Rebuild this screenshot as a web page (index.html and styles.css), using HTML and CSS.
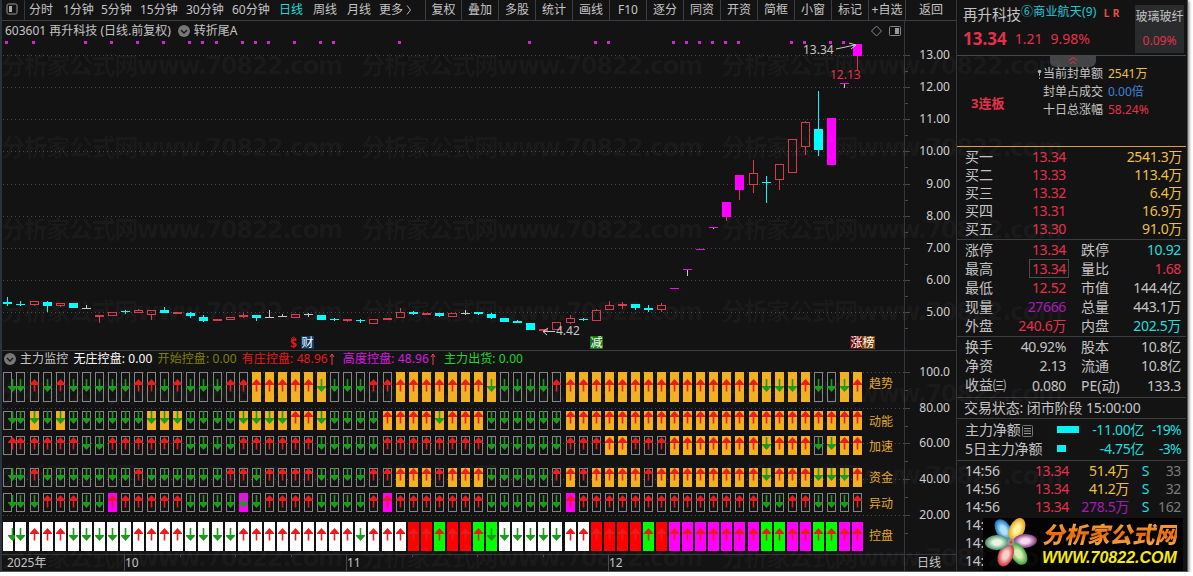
FILE: index.html
```html
<!DOCTYPE html>
<html lang="zh-CN">
<head>
    <meta charset="UTF-8">
    <title>再升科技 603601</title>
    <link rel="stylesheet" href="styles.css">
</head>
<body>
<div class="window">
    <div class="left">
        <div class="toolbar">
            <div class="layout-btn">
                <svg width="12" height="12"><rect x="1" y="1" width="10" height="10" rx="1.5" fill="none" stroke="#999"/><rect x="3" y="3" width="3" height="6" fill="#aaa"/></svg>
            </div>
            <div class="periods">
                <span>分时</span><span>1分钟</span><span>5分钟</span><span>15分钟</span><span>30分钟</span><span>60分钟</span><span class="on">日线</span><span>周线</span><span>月线</span><span>更多</span><span><svg width="6" height="12"><path d="M1 1.5L4.500 6L1 10.500" fill="none" stroke="#b5b5b5"/></svg></span>
            </div>
            <div class="tools">
                <span>复权</span><span>叠加</span><span>多股</span><span>统计</span><span>画线</span><span>F10</span><span>逐分</span><span>同资</span><span>开资</span><span>简框</span><span>小窗</span><span>标记</span><span>+自选</span><span>返回</span>
            </div>
        </div>
        <div class="pane main">
            <div class="plot">
                <div class="title">
                    <span class="code">603601 再升科技 (日线.前复权)</span>
                    <svg width="12" height="12"><circle cx="6" cy="6" r="6" fill="#777"/><path d="M3 5L6 8L9 5" fill="none" stroke="#151515" stroke-width="1.3"/></svg>
                    <span>转折尾A</span>
                    <svg class="corner" width="32" height="14"><path d="M6.500 2L11.500 7L6.500 12L1.500 7Z" fill="none" stroke="#888"/><rect x="19.5" y="2.5" width="11" height="9" rx="1" fill="none" stroke="#888"/><rect x="25" y="4" width="4" height="6" fill="#999"/></svg>
                </div>
                <svg id="kline" width="902" height="311" viewBox="2 39 902 311"></svg>
            </div>
            <svg class="axis" id="axis1" width="51" height="329" viewBox="904 21 51 329"></svg>
        </div>
        <div class="pane sub">
            <div class="plot">
                <div class="title ind">
                    <svg width="12" height="12"><circle cx="6" cy="6" r="6" fill="#777"/><path d="M3 5L6 8L9 5" fill="none" stroke="#151515" stroke-width="1.3"/></svg>
                    <span>主力监控</span>
                    <span class="c-white">无庄控盘: 0.00</span>
                    <span class="c-olive">开始控盘: 0.00</span>
                    <span class="c-red">有庄控盘: 48.96<svg width="6" height="13"><path d="M3 12V1M1 4L3 1L5 4" fill="none" stroke="#f04050"/></svg></span>
                    <span class="c-mag">高度控盘: 48.96<svg width="6" height="13"><path d="M3 12V1M1 4L3 1L5 4" fill="none" stroke="#f04050"/></svg></span>
                    <span class="c-green">主力出货: 0.00</span>
                </div>
                <svg id="signal" width="902" height="185" viewBox="2 369 902 185"></svg>
            </div>
            <svg class="axis" id="axis2" width="51" height="203" viewBox="904 351 51 203"></svg>
        </div>
        <div class="dates">
            <svg id="dates" width="902" height="16" viewBox="2 555 902 16"></svg>
            <span>日线</span>
        </div>
    </div>

    <div class="quote">
        <div class="head">
            <div class="info">
                <div class="name">再升科技<span class="tag">⑥商业航天(9)</span><b class="lr">L</b><b class="lr">R</b></div>
                <div class="price"><b>13.34</b><span>1.21</span><span>9.98%</span></div>
            </div>
            <div class="sector"><span>玻璃玻纤</span><span class="up">0.09%</span></div>
        </div>
        <div class="limit">
            <div class="fold"><svg width="12" height="9"><path d="M2 4.500L6 1.500L10 4.500M3 8L6 5.500L9 8" fill="none" stroke="#e83048"/></svg></div>
            <b class="streak">3连板</b>
            <div class="limit-rows">
                <p><svg width="5" height="10"><circle cx="2.500" cy="2.500" r="1.800" fill="#aaa"/><path d="M2.500 3V7M2.500 8.500V10" stroke="#aaa"/></svg><span>当前封单额</span><i class="yel">2541万</i></p>
                <p><span>封单占成交</span><i class="blue">0.00倍</i></p>
                <p><span>十日总涨幅</span><i class="up">58.24%</i></p>
            </div>
        </div>
        <div class="book">
            <p><span>买一</span><i class="up">13.34</i><i class="yel">2541.3万</i></p>
            <p><span>买二</span><i class="up">13.33</i><i class="yel">113.4万</i></p>
            <p><span>买三</span><i class="up">13.32</i><i class="yel">6.4万</i></p>
            <p><span>买四</span><i class="up">13.31</i><i class="yel">16.9万</i></p>
            <p><span>买五</span><i class="up">13.30</i><i class="yel">91.0万</i></p>
        </div>
        <div class="stats">
            <p><span>涨停</span><i class="up">13.34</i><span>跌停</span><i class="down">10.92</i></p>
            <p><span>最高</span><i class="up boxed">13.34</i><span>量比</span><i class="up">1.68</i></p>
            <p><span>最低</span><i class="up">12.52</i><span>市值</span><i>144.4亿</i></p>
            <p><span>现量</span><i class="pur">27666</i><span>总量</span><i>443.1万</i></p>
            <p><span>外盘</span><i class="up">240.6万</i><span>内盘</span><i class="down">202.5万</i></p>
        </div>
        <div class="stats fin">
            <p><span>换手</span><i>40.92%</i><span>股本</span><i>10.8亿</i></p>
            <p><span>净资</span><i>2.13</i><span>流通</span><i>10.8亿</i></p>
            <p><span>收益<small>㈢</small></span><i>0.080</i><span>PE(动)</span><i>133.3</i></p>
        </div>
        <div class="status">交易状态: 闭市阶段 15:00:00</div>
        <div class="flow">
            <p><span>主力净额<svg width="13" height="13"><rect x="1.5" y="1.5" width="10" height="11" rx="1" fill="none" stroke="#777"/><path d="M3 4.500H10M3 7H10M3 9.500H10" stroke="#999"/></svg></span><em class="bar b1"></em><i>-11.00亿</i><i>-19%</i></p>
            <p><span>5日主力净额</span><em class="bar b2"></em><i>-4.75亿</i><i>-3%</i></p>
        </div>
        <div class="ticks">
            <p><span>14:56</span><i class="up">13.34</i><i class="yel">51.4万</i><i class="down">S</i><i class="dim">33</i></p>
            <p><span>14:56</span><i class="up">13.34</i><i class="yel">41.2万</i><i class="down">S</i><i class="dim">32</i></p>
            <p><span>14:56</span><i class="up">13.34</i><i class="pur">278.5万</i><i class="down">S</i><i class="dim">162</i></p>
            <p><span>14:</span></p>
            <p><span>14:</span></p>
            <p><span>14:</span></p>
        </div>
        <div class="logo">
            <svg width="54" height="53" viewBox="-28 -24 54 53">
                <defs>
                    <radialGradient id="pb"><stop offset=".35" stop-color="#b0e0f8"/><stop offset="1" stop-color="#1070c0"/></radialGradient>
                    <radialGradient id="py"><stop offset=".35" stop-color="#fdf3a0"/><stop offset="1" stop-color="#e8a010"/></radialGradient>
                    <radialGradient id="pp"><stop offset=".35" stop-color="#f4d8ee"/><stop offset="1" stop-color="#80307c"/></radialGradient>
                    <radialGradient id="pg"><stop offset=".35" stop-color="#d8f0b0"/><stop offset="1" stop-color="#389c38"/></radialGradient>
                    <radialGradient id="pr"><stop offset=".35" stop-color="#fbd0c8"/><stop offset="1" stop-color="#c82c34"/></radialGradient>
                    <radialGradient id="pt"><stop offset=".35" stop-color="#e8f4e0"/><stop offset="1" stop-color="#408c68"/></radialGradient>
                </defs>
                <ellipse cx="14" rx="12" ry="7.5" fill="url(#pb)" transform="rotate(-122)"/>
                <ellipse cx="14" rx="12" ry="7.5" fill="url(#py)" transform="rotate(-65)"/>
                <ellipse cx="14" rx="12" ry="7" fill="url(#pp)" transform="rotate(-4)"/>
                <ellipse cx="14" rx="12" ry="7.5" fill="url(#pg)" transform="rotate(58)"/>
                <ellipse cx="14" rx="12" ry="7.5" fill="url(#pr)" transform="rotate(112)"/>
                <ellipse cx="14" rx="12" ry="7.5" fill="url(#pt)" transform="rotate(178)"/>
                <circle r="3.5" fill="#8a9a90"/><circle r="1.6" fill="#d84030"/>
            </svg>
            <div class="logo-text"><b>分析家公式网</b><strong>WWW.70822.COM</strong></div>
        </div>
    </div>
    <svg class="watermark" id="watermark" width="1187" height="571"></svg>
</div>
<script src="chart.js"></script>
</body>
</html>
```
FILE: styles.css
```css
body, p {
    margin: 0;
    padding: 0;
}

body {
    background: #fff;
    font-family: "Noto Sans", "Noto Sans CJK SC", sans-serif;
    font-size: 12px;
    color: #c4c4c4;
    overflow: hidden;
}

i, em {
    font-style: normal;
}

.window {
    display: flex;
    position: relative;
    box-sizing: border-box;
    width: 1188px;
    height: 572px;
    background: #141314;
    border-left: 2px solid #2b333d;
    border-right: 1px solid #555;
    border-bottom: 1px solid #555;
    box-shadow: 1px 1px 3px #777;
}

.left {
    width: 954px;
    border-right: 1px solid #33363b;
}

/* 顶部工具栏 */
.toolbar {
    display: flex;
    height: 20px;
    line-height: 19px;
    border-bottom: 1px solid #3a3d42;
    white-space: nowrap;
}

.layout-btn {
    width: 22px;
    border-right: 1px solid #33363b;
}

.layout-btn svg {
    margin: 3px 0 0 4px;
    display: block;
}

.periods {
    display: grid;
    grid-template-columns: 34px 38px 39px 46px 46px 47px 34px 34px 32px 27px 19px;
    width: 396px;
    padding-left: 4px;
}

.periods .on {
    color: #22d8d8;
}

.periods svg {
    vertical-align: -2px;
}

.tools {
    display: grid;
    grid-template-columns: 36px repeat(12, 37px) 1fr;
    flex: 1;
    text-align: center;
}

.tools span {
    border-left: 1px solid #3a3d42;
}

.pane {
    display: flex;
}

.main {
    height: 329px;
    border-bottom: 1px solid #3a3d42;
}

.sub {
    height: 203px;
    border-bottom: 1px solid #33363b;
}

.plot {
    width: 902px;
}

.pane svg, .dates svg {
    display: block;
}

.axis {
    border-left: 1px solid #33363b;
}

.title {
    display: flex;
    align-items: center;
    box-sizing: border-box;
    height: 18px;
    padding: 2px 0 0 3px;
    line-height: 16px;
    white-space: nowrap;
}

.title svg {
    margin: 0 4px 0 7px;
}

.title .corner {
    margin: 0 2px 0 auto;
}

.ind {
    padding: 0 0 2px 2px;
}

.ind span {
    display: flex;
    align-items: center;
    margin-right: 5px;
    letter-spacing: 0.1px;
}

.ind > svg {
    margin: 0 4px 0 0;
}

.ind span svg {
    margin: 0 3px 0 1px;
}

.c-white { color: #fff; }
.c-olive { color: #808000; }
.c-red { color: #e81818; }
.c-mag { color: #d818e0; }
.c-green { color: #18d828; }

.dates {
    display: flex;
    height: 16px;
    line-height: 15px;
}

.dates span {
    flex: 1;
    border-left: 1px solid #33363b;
    padding-left: 12px;
}

svg text {
    font-family: "Noto Sans", "Noto Sans CJK SC", sans-serif;
    font-size: 12px;
    fill: #c4c4c4;
}

/* 右侧行情 */
.quote {
    position: relative;
    width: 229px;
    font-size: 14px;
    overflow: hidden;
    white-space: nowrap;
}

.quote i {
    letter-spacing: -0.35px;
}

.up { color: #e6304a; }
.down { color: #20dede; }
.yel { color: #ecc040; }
.blue { color: #3c84d8; }
.pur { color: #a818b8; }
.dim { color: #7c7c7c; }

.head {
    display: flex;
    justify-content: space-between;
    height: 55px;
    border-bottom: 1px solid #44474b;
}

.info {
    padding-left: 6px;
}

.name {
    display: flex;
    height: 27px;
    line-height: 29px;
    font-size: 14.5px;
}

.tag {
    margin-right: 7px;
    font-size: 12px;
    line-height: 23px;
    letter-spacing: 0.2px;
    color: #20c8d8;
}

.lr {
    width: 9px;
    font-size: 10px;
    line-height: 26px;
    color: #e85040;
}

.price {
    display: flex;
    gap: 8px;
    color: #e6304a;
    font-size: 14px;
    line-height: 24px;
}

.price b {
    font-size: 17px;
}

.sector {
    display: flex;
    flex-direction: column;
    width: 49px;
    height: 48px;
    margin: 5px 2px 0 0;
    background: #292b2d;
    font-size: 12px;
    line-height: 24px;
    text-align: center;
}

.limit {
    display: flex;
    position: relative;
    height: 90px;
    border-bottom: 1px solid #dca04a;
}

.fold {
    position: absolute;
    left: 93px;
    top: 0;
    width: 46px;
    height: 11px;
    background: #434446;
    border-radius: 0 0 6px 6px;
    text-align: center;
    line-height: 8px;
}

.streak {
    width: 66px;
    padding-left: 14px;
    font-size: 13px;
    line-height: 95px;
    color: #e6304a;
}

.limit-rows {
    position: relative;
    padding-top: 9px;
    font-size: 12px;
    line-height: 18px;
}

.limit-rows p {
    display: flex;
    justify-content: flex-end;
    align-items: center;
}

.limit-rows span {
    width: 61px;
    margin-left: 1px;
}

.limit-rows i {
    width: 46px;
    margin-left: 4px;
    letter-spacing: 0;
}

.book, .stats, .flow, .status {
    border-bottom: 1px solid #3a3d42;
}

.book {
    height: 91px;
    line-height: 18px;
    padding-top: 1px;
}

.book p {
    display: grid;
    grid-template-columns: 40px 61px 116px;
    height: 18px;
    padding-left: 8px;
}

.book i, .stats i, .flow i, .ticks i {
    text-align: right;
}

.stats {
    height: 96px;
}

.stats p {
    display: grid;
    grid-template-columns: 40px 61px 44px 71px;
    align-items: center;
    height: 19px;
    padding-left: 8px;
    line-height: 19px;
}

.stats span + i + span {
    padding-left: 15px;
}

.stats .boxed {
    justify-self: end;
    margin-right: -2px;
    padding: 0 2px;
    line-height: 17px;
    height: 17px;
    outline: 1px solid #4c4c4c;
}

.stats small {
    font-size: 13px;
}

.fin {
    height: 60px;
}

.status {
    height: 20px;
    padding-left: 7px;
    font-size: 14px;
    letter-spacing: -0.1px;
    line-height: 20px;
}

.flow {
    height: 40px;
    padding-top: 1px;
    color: #20dede;
}

.flow p {
    display: grid;
    grid-template-columns: 92px 30px 57px 37px;
    align-items: center;
    height: 19px;
    padding-left: 8px;
    line-height: 19px;
}

.flow span {
    color: #c4c4c4;
    letter-spacing: -0.1px;
}

.flow span svg {
    vertical-align: -2px;
}

.flow i:last-child {
    letter-spacing: -0.7px;
}

.bar {
    height: 7px;
    background: #00f4f4;
}

.b1 { width: 22px; }
.b2 { width: 9px; }

.ticks {
    padding-top: 1px;
}

.ticks p {
    display: grid;
    grid-template-columns: 44px 60px 60px 20px 32px;
    height: 18px;
    padding-left: 8px;
    line-height: 18px;
}

.ticks span {
    letter-spacing: -0.2px;
}

/* 右下角标志 */
.logo {
    display: flex;
    align-items: center;
    position: absolute;
    left: 26px;
    bottom: 0;
    width: 200px;
    height: 53px;
    background: #030303;
}

.logo-text {
    display: flex;
    flex-direction: column;
    margin-left: 5px;
}

.logo-text b {
    height: 27px;
    line-height: 27px;
    font-size: 22.5px;
    font-style: italic;
    font-weight: 900;
    background: linear-gradient(#f8b848, #e86808 50%, #f8c060);
    -webkit-background-clip: text;
    color: transparent;
}

.logo-text strong {
    font: italic bold 16px/20px "Liberation Sans", Arial, sans-serif;
    color: #f4e818;
}

.watermark {
    position: absolute;
    left: -2px;
    top: 0;
    pointer-events: none;
}

.watermark text {
    font-family: "DejaVu Sans", "Noto Sans CJK SC", sans-serif;
    font-size: 24px;
    font-weight: bold;
    fill: #fff;
    fill-opacity: 0.035;
}
```
FILE: chart.js
```js
// 颜色
var RED = '#d83a4c', CYAN = '#00ffff', MAG = '#ff00ff', WHITE = '#c8c8c8';

// 第 i 根柱子的左边缘
function colX(i) {
    var x = 3 + 13 * i;
    [2, 16, 29, 43, 57].forEach(function (n) {
        if (i >= n) x++;
    });
    return x;
}

function rect(x, y, w, h, fill) {
    return '<rect x="' + x + '" y="' + y + '" width="' + w + '" height="' + h + '" fill="' + fill + '"/>';
}

function box(x, y, w, h, stroke) {
    return '<rect x="' + (x + 0.5) + '" y="' + (y + 0.5) + '" width="' + (w - 1) + '" height="' + (h - 1) + '" fill="none" stroke="' + stroke + '"/>';
}

function text(x, y, s, fill, extra) {
    return '<text x="' + x + '" y="' + y + '" style="fill:' + (fill || '#c4c4c4') + '" ' + (extra || '') + '>' + s + '</text>';
}

function grid(y) {
    return '<path d="M3 ' + (y + 0.5) + 'H904" stroke="#48484a" stroke-dasharray="1 3"/>';
}

// 类型(h空心 r红实 c青 w白 m紫), 实体上, 实体下, 最高, 最低
var candles = [
    ['c', 302, 304, 297, 306], ['c', 304, 305, 301, 306], ['h', 301, 305, 301, 306], ['c', 302, 306, 301, 312],
    ['h', 303, 306, 303, 307], ['c', 303, 308, 303, 308], ['w', 308, 309, 305, 309], ['r', 315, 317, 315, 323],
    ['h', 312, 316, 312, 316], ['c', 311, 312, 310, 314], ['h', 310, 313, 309, 313], ['h', 310, 315, 310, 320],
    ['c', 310, 313, 307, 313], ['r', 312, 314, 312, 314], ['c', 313, 316, 312, 318], ['c', 317, 321, 315, 322],
    ['r', 319, 321, 319, 321], ['h', 317, 320, 317, 320], ['r', 315, 317, 313, 318], ['c', 315, 318, 315, 321],
    ['w', 317, 318, 310, 318], ['w', 316, 317, 314, 317], ['h', 314, 318, 314, 318], ['w', 314, 315, 313, 317],
    ['c', 315, 320, 315, 320], ['c', 319, 320, 318, 321], ['r', 319, 321, 319, 322], ['c', 320, 321, 319, 323],
    ['h', 319, 324, 319, 324], ['r', 318, 320, 318, 320], ['h', 312, 318, 308, 318], ['c', 312, 314, 311, 315],
    ['r', 313, 315, 313, 315], ['c', 313, 316, 313, 317], ['h', 313, 317, 313, 317], ['w', 313, 314, 310, 315],
    ['c', 312, 314, 312, 315], ['c', 314, 318, 313, 319], ['c', 318, 322, 318, 322], ['c', 321, 323, 320, 323],
    ['c', 323, 330, 323, 330], ['r', 329, 331, 329, 331], ['h', 322, 330, 322, 330], ['h', 318, 323, 315, 324],
    ['c', 319, 320, 318, 321], ['h', 310, 321, 309, 321], ['h', 305, 310, 301, 310], ['r', 304, 306, 302, 309],
    ['c', 304, 308, 304, 310], ['c', 308, 310, 305, 312], ['h', 305, 310, 303, 312], ['m', 288, 289, 288, 289],
    ['m', 269, 270, 269, 276], ['m', 249, 250, 249, 250], ['m', 227, 228, 227, 229], ['m', 202, 217, 202, 221],
    ['m', 175, 190, 175, 200], ['h', 173, 185, 160, 193], ['c', 182, 183, 176, 203], ['h', 164, 180, 164, 190],
    ['h', 139, 173, 139, 173], ['h', 122, 147, 121, 155], ['c', 129, 150, 91, 156], ['m', 118, 165, 118, 165],
    ['m', 83, 84, 83, 88], ['m', 44, 56, 44, 70]
];

function drawKline() {
    var s = '';
    [55, 87, 119, 151, 184, 216, 248, 280, 312].forEach(function (y) {
        s += grid(y);
    });
    [0, 2, 6, 8, 10, 12, 14, 15, 16, 18, 19, 20, 22, 24, 25, 30, 40, 45, 46, 51, 52, 53, 54, 55, 56, 60, 61, 63, 64].forEach(function (i) {
        s += rect(colX(i) + 2, 41, 3, 3, '#d820d8');
    });
    candles.forEach(function (c, i) {
        var x = colX(i), t = c[0], flat = c[2] - c[1] === 1;
        if (t === 'h') {
            s += rect(x + 4, c[3], 1, c[1] - c[3], RED) + rect(x + 4, c[2], 1, c[4] - c[2], RED);
            s += box(x, c[1], 9, c[2] - c[1], RED);
            return;
        }
        var color = {r: RED, c: CYAN, w: WHITE, m: MAG}[t];
        var wick = t === 'm' ? (flat ? WHITE : RED) : color;
        s += rect(x + 4, c[3], 1, c[4] - c[3], wick);
        s += rect(x, c[1], 9, c[2] - c[1], color);
    });

    s += text(803, 54, '13.34') + '<path d="M836 49L855 45M849 43L856 45L851 49" fill="none" stroke="#ccc"/>';
    s += text(830, 79, '12.13', '#e6304a');
    s += text(556, 335, '4.42') + '<path d="M555 331.500H543M548 328L543 331.500L547 335" fill="none" stroke="#ccc"/>';

    // 底部事件标记
    s += text(290, 348, '$', '#e01818', 'font-weight="bold"') + '<path d="M291 339L293.500 337L296 339" fill="none" stroke="#e01818"/>';
    [[301, '财', '#0c3c6c'], [590, '减', '#147414'], [850, '涨', '#6c0808'], [862, '榜', '#7c4008']].forEach(function (m) {
        s += rect(m[0], 336, 13, 13, m[2]) + text(m[0] + 0.5, 347, m[1], '#fff');
    });
    document.getElementById('kline').innerHTML = s;
}

// u/d 表示方向，大写表示填充
var rows = [
    {name: '趋势', y: 372, h: 30, ay: 379, ly: 388, fill: '#f0b020', data: 'ddududdddduududdduuUUUUUDddduuUUUUUUUDdddduUUUUUUUUUUUUUUUDDDUddDU'},
    {name: '动能', y: 411, h: 19, ay: 411, ly: 426, fill: '#f0b020', data: 'ddDdDddddddDDDddddDDDDUUDddddUUUUDUUUddddddUUUUUUUUUUUUUUUUUUUUUUU'},
    {name: '加速', y: 436, h: 19, ay: 437, ly: 451, fill: '#f0b020', data: 'uuuuuudduuuuuudddduuuuuuddddduuuuuuuudddddduuuUUuuuUUUUUUUDUUUdDUU'},
    {name: '资金', y: 468, h: 19, ay: 468, ly: 482, fill: '#f0b020', data: 'ddudddddddudddddduuduuuudddduuUUUuUUUddddduUuUUUUuUUUUUUUUDUUUDDDU'},
    {name: '异动', y: 493, h: 19, ay: 495, ly: 508, fill: '#ff00ff', data: 'ddduuuddUuuuuuddddDduuuudddduUuuuuuuuddddddUuuuuuuuuuuuuuudduudddu'}
];
var control = 'dduuuddddduuuudddduuuuuuuuuduuuuuuuuudddddduuuuuuuuuuuuuuuuuuuuuuu';
var controlColor = 'wwwwwwwwwwwwwwwwwwwwwwwwwwwwwwwrrgrrggwwwwwwwrrrrgrmmmmmmmggmmggmm';

function arrow(i, y, dir) {
    var x = colX(i) + (i === 0 ? 9 : 4);
    if (dir === 'u') {
        return '<path d="M' + (x + 0.5) + ' ' + y + 'l4.500 5v1h-3.700v6.500h-1.600v-6.500h-3.700v-1z" fill="#e81c1c"/>';
    }
    return '<path d="M' + (x + 0.5) + ' ' + (y + 13) + 'l4.500 -5v-1h-3.700v-7h-1.600v7h-3.700v1z" fill="#1c9a1c"/>';
}

function drawSignal() {
    var s = '';
    [372, 408, 443, 479, 515].forEach(function (y) {
        s += grid(y);
    });
    rows.forEach(function (r) {
        for (var i = 0; i < r.data.length; i++) {
            var ch = r.data[i], x = colX(i), low = ch.toLowerCase();
            if (ch === low) {
                s += rect(x, r.y, 9, r.h, '#141314') + box(x, r.y, 9, r.h, '#858585');
            } else {
                s += rect(x, r.y, 9, r.h, r.fill);
            }
        }
        for (i = 0; i < r.data.length; i++) {
            s += arrow(i, r.ay, r.data[i].toLowerCase());
        }
        s += text(869, r.ly, r.name, '#e0a82c');
    });
    var colors = {w: '#fff', r: '#ff0000', g: '#00ff00', m: '#ff00ff'};
    for (var i = 0; i < control.length; i++) {
        s += rect(i ? colX(i) - 1 : 3, 522, i ? 11 : 10, 29, colors[controlColor[i]]);
        s += arrow(i, 528, control[i]);
    }
    s += text(869, 540, '控盘', '#e0a82c');
    document.getElementById('signal').innerHTML = s;
}

function drawAxis() {
    var s = '';
    [[13, 55], [12, 87], [11, 119], [10, 151], [9, 184], [8, 216], [7, 248], [6, 280], [5, 312]].forEach(function (a) {
        s += rect(904, a[1], 5, 1, '#44474c') + rect(904, a[1] + 16, 3, 1, '#44474c');
        s += text(949, a[1] + 4, a[0].toFixed(2), '#d0d0d0', 'text-anchor="end"');
    });
    document.getElementById('axis1').innerHTML = s;

    s = '';
    [['100.0', 372], ['80.00', 408], ['60.00', 443], ['40.00', 479], ['20.00', 515]].forEach(function (a) {
        s += rect(904, a[1], 5, 1, '#44474c') + rect(904, a[1] + 18, 3, 1, '#44474c');
        s += text(949, a[1] + 4, a[0], '#d0d0d0', 'text-anchor="end"');
    });
    document.getElementById('axis2').innerHTML = s;
}

function drawDates() {
    var s = text(7, 567, '2025年');
    [[124, '10'], [346, '11'], [608, '12']].forEach(function (d) {
        s += rect(d[0], 555, 1, 16, '#44474c') + text(d[0] + 1, 567, d[1]);
    });
    [180, 235, 291, 412, 477, 543].forEach(function (x) {
        s += rect(x, 555, 1, 2, '#44474c');
    });
    document.getElementById('dates').innerHTML = s;
}

function drawWatermark() {
    var s = '';
    for (var y = 74; y < 580; y += 82) {
        for (var x = 1; x < 900; x += 360) {
            s += '<text x="' + x + '" y="' + y + '" textLength="342">分析家公式网www.70822.com</text>';
        }
    }
    document.getElementById('watermark').innerHTML = s;
}

drawKline();
drawSignal();
drawAxis();
drawDates();
drawWatermark();
```
